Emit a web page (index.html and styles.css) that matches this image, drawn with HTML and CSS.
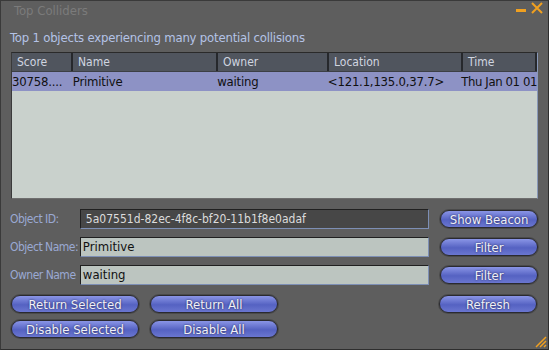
FILE: index.html
```html
<!DOCTYPE html>
<html lang="en">
<head>
  <meta charset="UTF-8">
  <meta name="viewport" content="width=device-width, initial-scale=1.0">
  <link rel="stylesheet" href="styles.css">
  <title>Top Colliders</title>
</head>
<body>
  <div class="janela">
    <div class="barra">
      <span class="titulo">Top Colliders</span>
      <div class="controles">
        <span class="minimizar"></span>
        <svg class="fechar" width="12" height="12" viewBox="0 0 12 12">
          <path d="M1 1 L11 11 M11 1 L1 11" stroke="#f0a020" stroke-width="2"/>
        </svg>
      </div>
    </div>

    <p class="subtitulo">Top 1 objects experiencing many potential collisions</p>

    <div class="lista">
      <div class="cabecalho">
        <div class="col c1">Score</div>
        <div class="col c2">Name</div>
        <div class="col c3">Owner</div>
        <div class="col c4">Location</div>
        <div class="col c5">Time</div>
      </div>
      <div class="linha selecionada">
        <div class="cel c1">30758....</div>
        <div class="cel c2">Primitive</div>
        <div class="cel c3">waiting</div>
        <div class="cel c4">&lt;121.1,135.0,37.7&gt;</div>
        <div class="cel c5">Thu Jan 01 01</div>
      </div>
    </div>

    <div class="campos">
      <div class="campo">
        <label>Object ID:</label>
        <div class="entrada escura">5a07551d-82ec-4f8c-bf20-11b1f8e0adaf</div>
        <button class="botao">Show Beacon</button>
      </div>
      <div class="campo">
        <label>Object Name:</label>
        <div class="entrada">Primitive</div>
        <button class="botao">Filter</button>
      </div>
      <div class="campo">
        <label>Owner Name</label>
        <div class="entrada">waiting</div>
        <button class="botao">Filter</button>
      </div>
    </div>

    <div class="acoes">
      <div class="grade">
        <button class="botao">Return Selected</button>
        <button class="botao">Return All</button>
        <button class="botao">Disable Selected</button>
        <button class="botao">Disable All</button>
      </div>
      <button class="botao">Refresh</button>
    </div>

    <svg class="alca" width="12" height="12" viewBox="0 0 12 12">
      <path d="M11 1 L1 11 M11 5 L5 11 M11 9 L9 11" stroke="#f0a020" stroke-width="1.5"/>
    </svg>
  </div>
</body>
</html>
```

FILE: styles.css
```css
*{
  margin: 0;
  padding: 0;
  box-sizing: border-box;
}
body{
  background: #3c3c3c;
  font-family: "DejaVu Sans Condensed", "DejaVu Sans", sans-serif;
  font-stretch: condensed;
  font-size: 12px;
}
.janela{
  position: relative;
  width: 549px;
  height: 350px;
  background: #5e5e5e;
  border: 1px solid #3a3a3a;
  border-right-color: #2e2e2e;
  border-bottom-color: #2e2e2e;
}
.barra{
  display: flex;
  justify-content: space-between;
  align-items: center;
  height: 20px;
  padding: 0 5px 0 13px;
}
.titulo{
  color: #7b7b7b;
  font-size: 13px;
  margin-top: -2px;
}
.controles{
  display: flex;
  align-items: center;
  gap: 5px;
  margin-top: -7px;
}
.minimizar{
  display: block;
  width: 10px;
  height: 3px;
  background: #f0a020;
  margin-top: 6px;
}
.subtitulo{
  color: #b4c3e6;
  font-size: 13px;
  letter-spacing: -0.2px;
  padding: 9px 0 0 9px;
  height: 31px;
}
.lista{
  margin: 0 10px 0 10px;
  height: 147px;
  background: #c9d1cc;
  border-top: 1px solid #2a2a2a;
  border-left: 1px solid #3a3a3a;
  border-right: 1px solid #8898b8;
  border-bottom: 1px solid #6e6e6e;
}
.cabecalho{
  display: flex;
  height: 19px;
  background: #50555e;
  color: #d0d6e0;
  border-bottom: 1px solid #3c3f45;
}
.col{
  padding: 2px 0 0 5px;
  border-right: 2px solid #26282c;
}
.c1{ width: 61px; }
.c2{ width: 145px; }
.c3{ width: 111px; }
.c4{ width: 134px; }
.c5{ width: 74px; }
.linha{
  display: flex;
  height: 19px;
  align-items: center;
  color: #101010;
  font-size: 13px;
  letter-spacing: -0.2px;
}
.selecionada{
  background: #8d92c5;
}
.cel{
  white-space: nowrap;
  overflow: hidden;
}
.cel.c5{
  width: 76px;
  overflow: visible;
  letter-spacing: -0.4px;
}
.campos{
  display: flex;
  flex-direction: column;
  gap: 8px;
  padding: 10px 10px 0 9px;
}
.campo{
  display: flex;
  align-items: center;
  height: 20px;
}
.campo label{
  width: 70px;
  color: #9aa9d3;
  font-size: 12px;
  letter-spacing: -0.5px;
  white-space: nowrap;
}
.entrada{
  width: 350px;
  height: 20px;
  margin-right: 11px;
  background: #bcc5c0;
  border-top: 1px solid #202020;
  border-left: 1px solid #202020;
  border-bottom: 1px solid #7d8fb5;
  border-right: 1px solid #7d8fb5;
  color: #111;
  font-size: 13px;
  padding: 1px 2px;
  white-space: nowrap;
  overflow: hidden;
}
.entrada.escura{
  background: #474747;
  color: #dcdcdc;
  font-size: 12px;
  padding-left: 5px;
  padding-top: 2px;
}
.botao{
  width: 98px;
  height: 18px;
  border-radius: 9px;
  border: 1px solid #2a2a30;
  background: linear-gradient(#8a95e6, #5562c2 55%, #6a76d0);
  color: #f0f0f8;
  font-family: "DejaVu Sans Condensed", "DejaVu Sans", sans-serif;
  font-stretch: condensed;
  font-size: 13px;
  text-shadow: 0 0 2px #20244a;
  box-shadow: 0 0 0 1px #4a4a4a;
  cursor: pointer;
}
.acoes{
  display: flex;
  justify-content: space-between;
  align-items: flex-start;
  padding: 10px 11px 0 10px;
}
.grade{
  display: grid;
  grid-template-columns: 128px 128px;
  column-gap: 11px;
  row-gap: 7px;
}
.grade .botao{
  width: 128px;
}
.alca{
  position: absolute;
  right: 1px;
  bottom: 1px;
}
```
